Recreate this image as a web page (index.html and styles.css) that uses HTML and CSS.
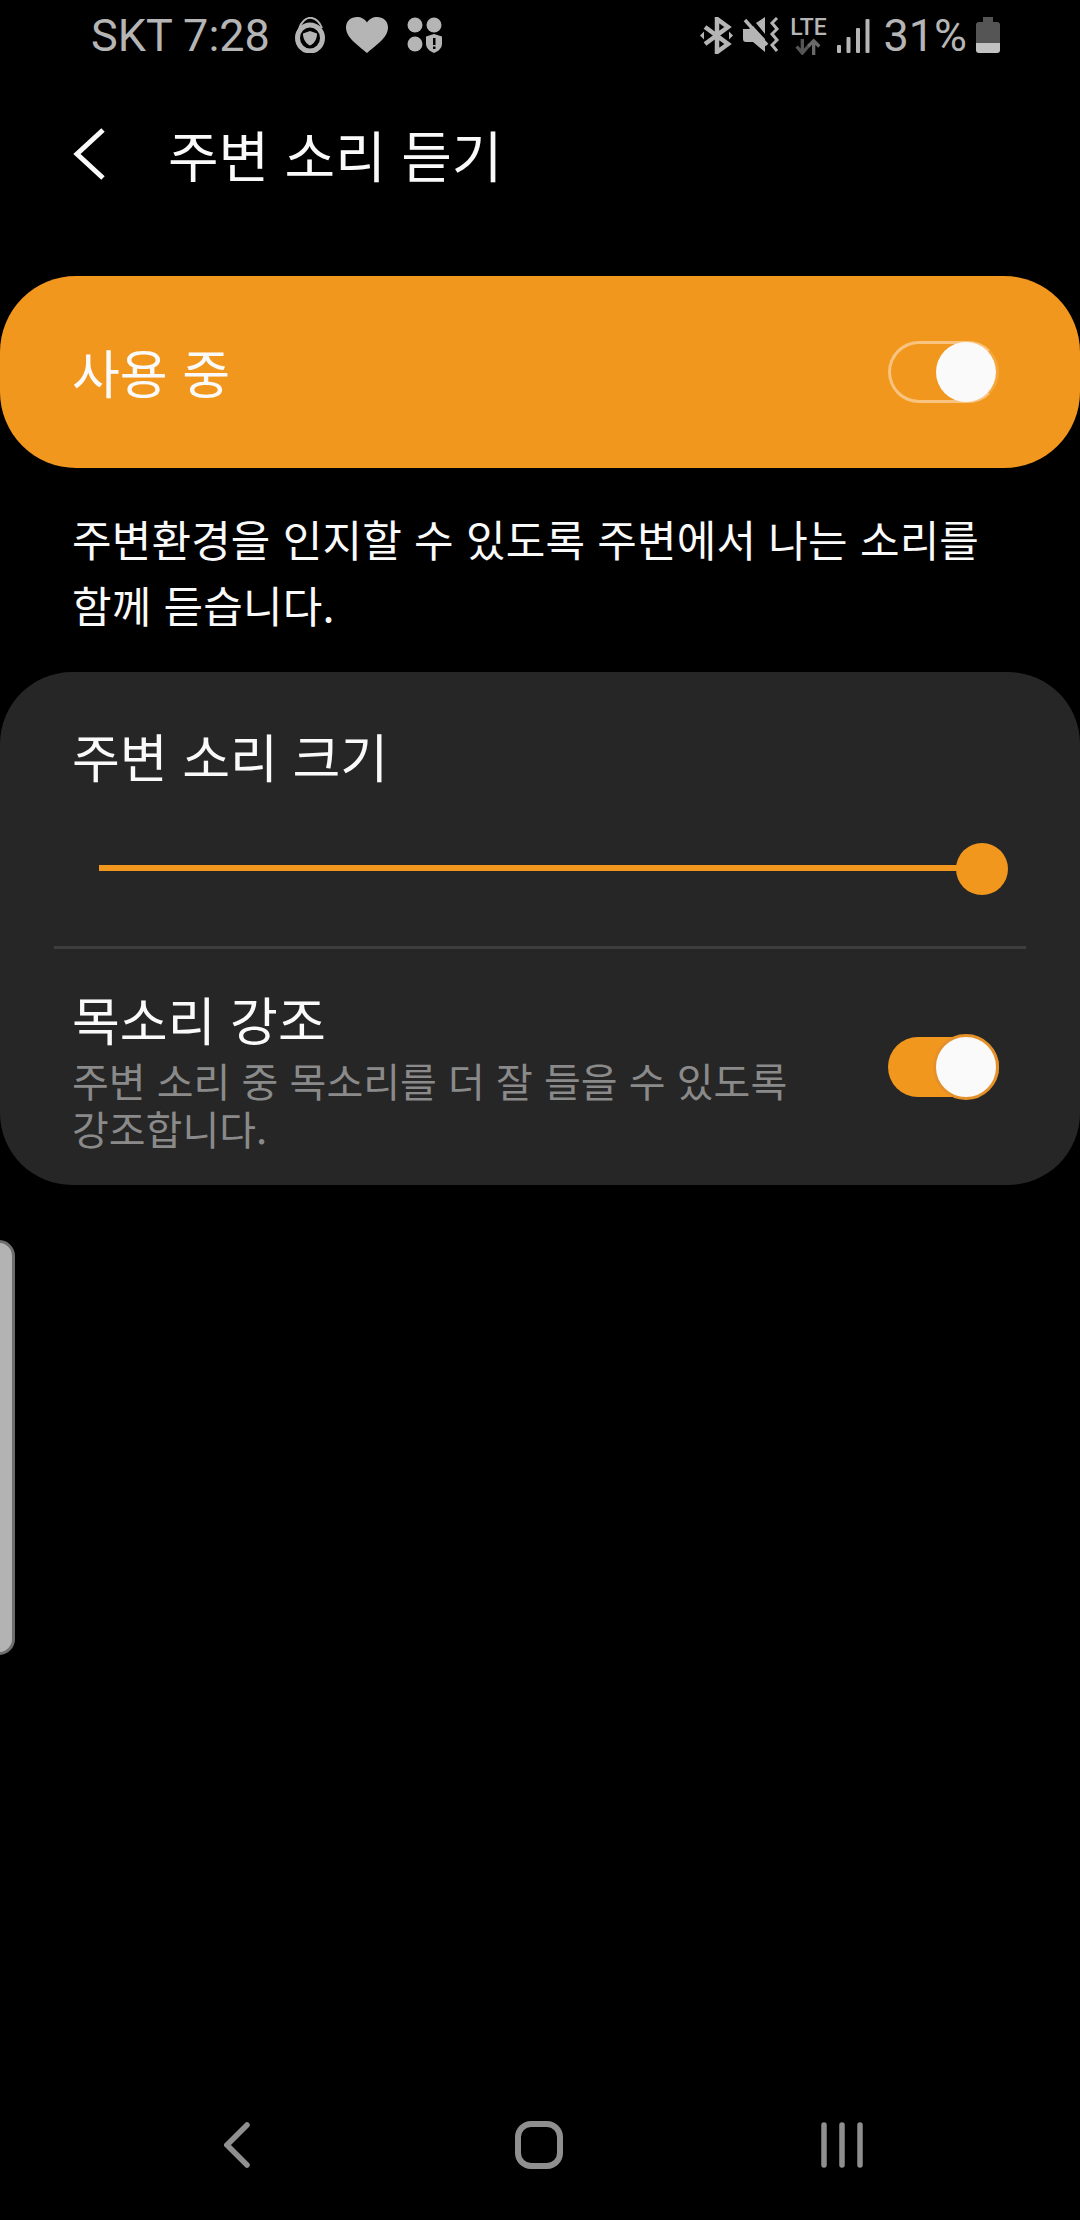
FILE: index.html
```html
<!DOCTYPE html>
<html lang="ko">
<head>
<meta charset="utf-8">
<title>주변 소리 듣기</title>
<link rel="stylesheet" href="styles.css">
</head>
<body>
<div class="screen">
  <div class="status">
    <div class="status-left">
      <span class="status-text">SKT 7:28</span>
      <svg class="ic-ring" viewBox="0 0 30 36"><path d="M4 12C6 5 11 0 17 1c5 1 8 5 10 10" fill="none" stroke="#b5b5b5" stroke-width="2"/><ellipse cx="15" cy="21" rx="12.500" ry="13" fill="none" stroke="#b5b5b5" stroke-width="5"/><path d="M15 14l7 2.500c0 6-3 10-7 12-4-2-7-6-7-12z" fill="#b5b5b5"/></svg>
      <svg class="ic-heart" viewBox="0 0 42 36"><path d="M21 36C13 29 0 21 0 10.500 0 4 5 0 11 0c4 0 8 2 10 5.500C23 2 27 0 31 0c6 0 11 4 11 10.500C42 21 29 29 21 36z" fill="#b5b5b5"/></svg>
      <svg class="ic-dots" viewBox="0 0 36 36"><circle cx="8" cy="8" r="7.500" fill="#b5b5b5"/><circle cx="27" cy="8" r="7.500" fill="#b5b5b5"/><circle cx="8" cy="27" r="7.500" fill="#b5b5b5"/><path d="M27 17l8 2.500v7c0 5-4 8-8 9.500-4-1.500-8-4.500-8-9.500v-7z" fill="#b5b5b5"/><rect x="26" y="21" width="2.500" height="7" fill="#000"/><rect x="26" y="29.500" width="2.500" height="2.500" fill="#000"/></svg>
    </div>
    <div class="status-right">
      <svg class="ic-bt" viewBox="0 0 33 37"><path d="M5 10l23 17-11 8V2l11 8L5 27" fill="none" stroke="#b5b5b5" stroke-width="4.500"/><path d="M0 18.500l4-4v8zM33 18.500l-4-4v8z" fill="#b5b5b5"/></svg>
      <svg class="ic-mute" viewBox="0 0 37 35"><path d="M0 12h6L10 9l12 13v13L10 25H3c-2 0-3-1-3-3z" fill="#b5b5b5"/><path d="M13 6l9-6v17z" fill="#b5b5b5"/><path d="M2 3l22 25" stroke="#b5b5b5" stroke-width="3.500"/><path d="M34 1l-5 5 5 6-5 5 5 6-5 5 5 6" fill="none" stroke="#b5b5b5" stroke-width="3"/></svg>
      <span class="lte"><span class="lte-text">LTE</span><svg class="ic-arrows" viewBox="0 0 26 18"><path d="M7 15V1M1 9l6 7 6-7" fill="none" stroke="#555" stroke-width="3.500"/><path d="M19 18V3M13 9l6-6 6 6" fill="none" stroke="#6a6a6a" stroke-width="3.500"/></svg></span>
      <svg class="ic-signal" viewBox="0 0 33 34"><rect x="0" y="26" width="4" height="8" rx="1" fill="#b5b5b5"/><rect x="9.500" y="18" width="4" height="16" rx="1" fill="#b5b5b5"/><rect x="19" y="9" width="4" height="25" rx="1" fill="#b5b5b5"/><rect x="28.500" y="0" width="4" height="34" rx="1" fill="#b5b5b5"/></svg>
      <span class="status-text">31%</span>
      <svg class="ic-batt" viewBox="0 0 24 36"><path d="M7 0h10v5h4a3 3 0 0 1 3 3v18H0V8a3 3 0 0 1 3-3h4z" fill="#555"/><path d="M0 26h24v7a3 3 0 0 1-3 3H3a3 3 0 0 1-3-3z" fill="#c2c2c2"/></svg>
    </div>
  </div>

  <header class="topbar">
    <svg class="ic-back" viewBox="0 0 34 52"><path d="M31 2L5 26l26 24" fill="none" stroke="#fafafa" stroke-width="5"/></svg>
    <h1 class="title">주변 소리 듣기</h1>
  </header>

  <section class="master">
    <span class="master-label">사용 중</span>
    <span class="toggle toggle-outline"><span class="knob"></span></span>
  </section>

  <p class="desc">주변환경을 인지할 수 있도록 주변에서 나는 소리를<br>함께 듣습니다.</p>

  <section class="panel">
    <div class="row-volume">
      <div class="row-title">주변 소리 크기</div>
      <div class="slider"><span class="slider-fill"></span><span class="slider-thumb"></span></div>
    </div>
    <div class="divider"></div>
    <div class="row-voice">
      <div class="voice-text">
        <div class="row-title">목소리 강조</div>
        <div class="row-sub">주변 소리 중 목소리를 더 잘 들을 수 있도록<br>강조합니다.</div>
      </div>
      <span class="toggle toggle-solid"><span class="knob"></span></span>
    </div>
  </section>

  <div class="edge-handle"></div>

  <nav class="navbar">
    <svg class="nav-back" viewBox="0 0 26 46"><path d="M23 3L3 23l20 20" fill="none" stroke="#8f8f8f" stroke-width="5.500" stroke-linecap="round"/></svg>
    <svg class="nav-home" viewBox="0 0 48 48"><rect x="3" y="3" width="42" height="42" rx="13" fill="none" stroke="#8f8f8f" stroke-width="6"/></svg>
    <svg class="nav-recent" viewBox="0 0 42 46"><path d="M3 3v40M21 3v40M39 3v40" fill="none" stroke="#8f8f8f" stroke-width="5.500" stroke-linecap="round"/></svg>
  </nav>
</div>
</body>
</html>
```
FILE: styles.css
```css
* { box-sizing: border-box; }
html, body { margin: 0; padding: 0; background: #000; }
body { font-family: "Noto Sans CJK KR", "Noto Sans", sans-serif; color: #fafafa; }
.screen { position: relative; width: 1080px; height: 2220px; background: #000; overflow: hidden; display: flex; flex-direction: column; }

.status { height: 72px; padding: 17px 80px 0 91px; display: flex; justify-content: space-between; align-items: flex-start; }
.status-left, .status-right { display: flex; align-items: flex-start; }
.status-text { font-family: Roboto, sans-serif; font-size: 45px; line-height: 38px; color: #b5b5b5; white-space: nowrap; }
.ic-ring { width: 30px; height: 36px; margin-left: 25px; }
.ic-heart { width: 42px; height: 36px; margin-left: 21px; }
.ic-dots { width: 36px; height: 36px; margin-left: 19px; }
.ic-bt { width: 33px; height: 37px; }
.ic-mute { width: 37px; height: 35px; margin-left: 10px; }
.lte { width: 36px; height: 38px; margin-left: 10px; display: flex; flex-direction: column; align-items: center; }
.lte-text { font-family: Roboto, sans-serif; font-weight: 500; font-size: 23px; line-height: 21px; color: #b5b5b5; }
.ic-arrows { width: 26px; height: 18px; }
.ic-signal { width: 33px; height: 34px; margin-left: 11px; margin-top: 2px; }
.status-right .status-text { margin-left: 13px; }
.ic-batt { width: 24px; height: 36px; margin-left: 9px; }

.topbar { height: 204px; padding: 49px 0 0 72px; display: flex; align-items: flex-start; }
.ic-back { width: 34px; height: 52px; margin-top: 7px; }
.title { margin: 0 0 0 62px; font-size: 55px; line-height: 64px; font-weight: 400; white-space: nowrap; }

.master { height: 192px; background: #f2971e; border-radius: 76px; padding: 0 81px 0 72px; display: flex; align-items: center; justify-content: space-between; }
.master-label { font-size: 52px; line-height: 60px; color: #fafafa; }

.toggle { position: relative; display: block; width: 111px; height: 60px; border-radius: 30px; }
.toggle-outline { height: 62px; border: 3px solid #f9c47f; border-right-color: #f5a63c; border-radius: 31px; }
.toggle-solid { background: #f2971e; }
.knob { position: absolute; top: 50%; right: 0; width: 60px; height: 60px; margin-top: -30px; border-radius: 50%; background: #fafafa; }
.toggle-solid .knob { width: 66px; height: 66px; margin-top: -33px; border: 3px solid #e5912a; }

.desc { margin: 0; padding: 37px 0 0 72px; height: 204px; font-size: 43px; line-height: 66px; letter-spacing: 0.15px; color: #fafafa; white-space: nowrap; }

.panel { height: 513px; background: #262626; border-radius: 72px; padding: 0 54px; display: flex; flex-direction: column; }
.row-volume { height: 274px; padding: 54px 0 0 18px; }
.row-title { font-size: 52px; line-height: 60px; color: #fafafa; white-space: nowrap; }
.slider { position: relative; margin: 57px 0 0 27px; width: 909px; height: 52px; }
.slider-fill { position: absolute; left: 0; top: 22px; width: 883px; height: 6px; background: #f2971e; }
.slider-thumb { position: absolute; right: 0; top: 0; width: 52px; height: 52px; border-radius: 50%; background: #f2971e; }
.divider { height: 3px; background: #3d3d3d; }
.row-voice { flex: 1; padding: 39px 27px 0 18px; display: flex; justify-content: space-between; align-items: flex-start; }
.voice-text .row-title { line-height: 62px; margin-bottom: 6px; }
.row-sub { font-size: 40px; line-height: 48px; color: #8a8a8a; white-space: nowrap; }
.row-voice .toggle { margin-top: 49px; }

.edge-handle { position: absolute; left: -20px; top: 1240px; width: 35px; height: 415px; background: #b3b3b3; border: 3px solid #6e6e6e; border-radius: 16px; }

.navbar { position: absolute; left: 0; right: 0; top: 2121px; height: 48px; padding: 0 0 0 224px; display: flex; align-items: center; }
.nav-back { width: 26px; height: 46px; }
.nav-home { width: 48px; height: 48px; margin-left: 265px; }
.nav-recent { width: 42px; height: 46px; margin-left: 258px; }
```
